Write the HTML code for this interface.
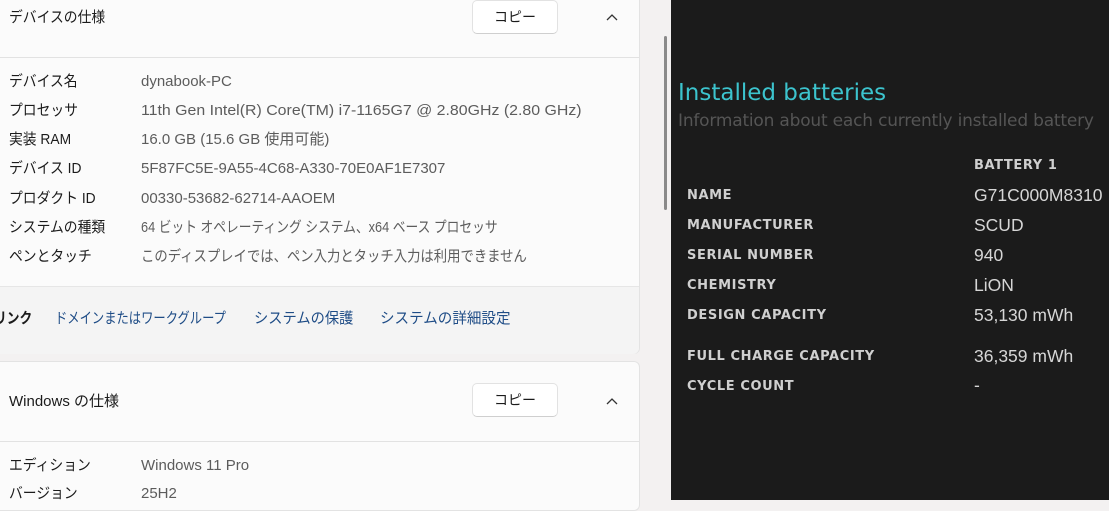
<!DOCTYPE html>
<html><head><meta charset="utf-8"><style>
*{margin:0;padding:0;box-sizing:border-box}
body{width:1109px;height:500px;overflow:hidden;position:relative;background:#f3f1f1;font-family:"Liberation Sans","Noto Sans CJK JP",sans-serif;}
.card{position:absolute;left:-8px;width:648px;background:#fbfbfb;border:1px solid #e3e3e3;border-radius:6px}
.t,.v,.lnk{position:absolute;font-size:15px;line-height:20px;height:20px;white-space:nowrap;transform-origin:left center}
.t{color:#1b1b1b}
.v{color:#5c5c5c;left:141px}
.btn{position:absolute;left:472px;width:86px;height:34px;background:#fff;border:1px solid #e2e2e2;border-bottom-color:#cfcfcf;border-radius:5px;font-size:14px;color:#1b1b1b;text-align:center;line-height:32px}
.chev{position:absolute;left:605px;width:14px;height:10px}
.dark{position:absolute;left:671px;top:0;width:438px;height:500px;background:#1b1b1b;font-family:"DejaVu Sans","Liberation Sans",sans-serif}
.lab{position:absolute;left:16px;font-size:13px;font-weight:bold;color:#d0d0d0;letter-spacing:0.6px}
.val{position:absolute;left:303px;font-size:17.5px;color:#d6d6d6;font-family:"Liberation Sans",sans-serif}
.lnk{top:309px;color:#1e4c86;transform:scaleX(0.82)}
.j{transform:scaleX(0.92)}
</style></head><body>
<div class="card" style="top:-6px;height:360px;">
  <div style="position:absolute;left:0;right:0;top:62px;height:1px;background:#e2e2e2"></div>
  <div style="position:absolute;left:0;right:0;top:291px;height:68px;background:#f4f4f4;border-top:1px solid #e6e6e6;border-radius:0 0 6px 6px"></div>
</div>
<div class="t j" style="left:9px;top:8px">デバイスの仕様</div>
<div class="btn" style="top:0">コピー</div>
<svg class="chev" style="top:12px" viewBox="0 0 14 10"><path d="M2 8 L7 3 L12 8" fill="none" stroke="#333" stroke-width="1.3"/></svg>
<div class="t j" style="left:9px;top:72px">デバイス名</div><div class="v" style="top:72px">dynabook-PC</div>
<div class="t j" style="left:9px;top:101px">プロセッサ</div><div class="v" style="top:101px;transform:scaleX(1.06)">11th Gen Intel(R) Core(TM) i7-1165G7 @ 2.80GHz (2.80 GHz)</div>
<div class="t j" style="left:9px;top:130px">実装 RAM</div><div class="v" style="top:130px">16.0 GB (15.6 GB 使用可能)</div>
<div class="t j" style="left:9px;top:159px">デバイス ID</div><div class="v" style="top:159px">5F87FC5E-9A55-4C68-A330-70E0AF1E7307</div>
<div class="t j" style="left:9px;top:189px">プロダクト ID</div><div class="v" style="top:189px">00330-53682-62714-AAOEM</div>
<div class="t j" style="left:9px;top:218px">システムの種類</div><div class="v" style="top:218px;transform:scaleX(0.85)">64 ビット オペレーティング システム、x64 ベース プロセッサ</div>
<div class="t j" style="left:9px;top:247px">ペンとタッチ</div><div class="v" style="top:247px;transform:scaleX(0.89)">このディスプレイでは、ペン入力とタッチ入力は利用できません</div>
<div class="t" style="left:-6px;top:309px;font-weight:bold;transform:scaleX(0.85)">リンク</div>
<div class="lnk" style="left:55px">ドメインまたはワークグループ</div>
<div class="lnk" style="left:254px;transform:scaleX(0.95)">システムの保護</div>
<div class="lnk" style="left:380px;transform:scaleX(0.97)">システムの詳細設定</div>
<div class="card" style="top:361px;height:150px;">
  <div style="position:absolute;left:0;right:0;top:79px;height:1px;background:#e2e2e2"></div>
</div>
<div class="t" style="left:9px;top:392px">Windows の仕様</div>
<div class="btn" style="top:383px">コピー</div>
<svg class="chev" style="top:396px" viewBox="0 0 14 10"><path d="M2 8 L7 3 L12 8" fill="none" stroke="#333" stroke-width="1.3"/></svg>
<div class="t j" style="left:9px;top:456px">エディション</div><div class="v" style="top:456px">Windows 11 Pro</div>
<div class="t j" style="left:9px;top:484px">バージョン</div><div class="v" style="top:484px">25H2</div>
<div style="position:absolute;left:664px;top:36px;width:3px;height:174px;background:#8a8a8a;border-radius:2px"></div>
<div class="dark">
  <div style="position:absolute;left:7px;top:80px;font-size:23px;color:#3cc4ce">Installed batteries</div>
  <div style="position:absolute;left:7px;top:111px;font-size:17px;color:#555;letter-spacing:-0.2px">Information about each currently installed battery</div>
  <div style="position:absolute;left:303px;top:158px;font-size:13px;font-weight:bold;color:#cfcfcf;letter-spacing:0.6px">BATTERY 1</div>
  <div class="lab" style="top:188px">NAME</div><div class="val" style="top:185px">G71C000M8310</div>
  <div class="lab" style="top:218px">MANUFACTURER</div><div class="val" style="top:215px">SCUD</div>
  <div class="lab" style="top:248px">SERIAL NUMBER</div><div class="val" style="top:245px">940</div>
  <div class="lab" style="top:278px">CHEMISTRY</div><div class="val" style="top:275px">LiON</div>
  <div class="lab" style="top:308px">DESIGN CAPACITY</div><div class="val" style="top:305px">53,130 mWh</div>
  <div class="lab" style="top:349px">FULL CHARGE CAPACITY</div><div class="val" style="top:346px">36,359 mWh</div>
  <div class="lab" style="top:379px">CYCLE COUNT</div><div class="val" style="top:375px">-</div>
</div>
</body></html>
